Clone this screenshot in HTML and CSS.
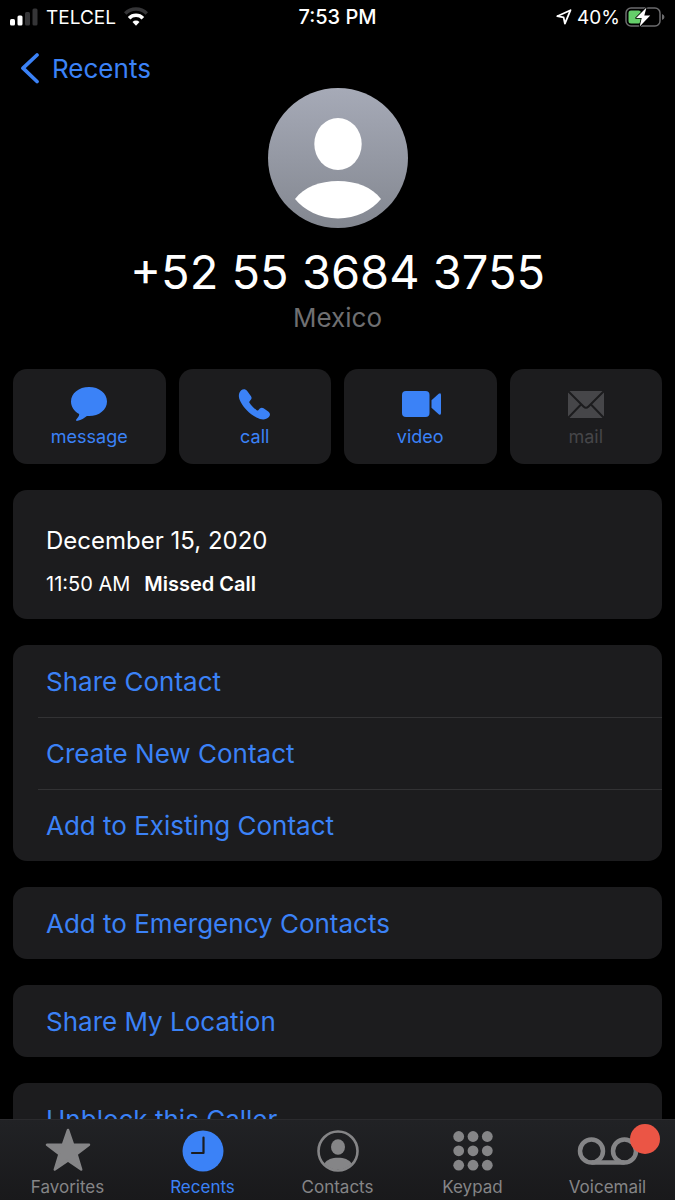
FILE: index.html
```html
<!DOCTYPE html>
<html lang="en">
<head>
    <title>Recents</title>
    <meta charset="utf-8">
    <meta name="viewport" content="width=device-width, initial-scale=1">
    <link rel="stylesheet" href="styles.css">
</head>

<body>
    <div class="status-bar">
        <div class="status-left">
            <svg width="28" height="18" viewBox="0 0 28 18">
                <rect x="0" y="11" width="5" height="6.500" rx="1.500" fill="#fff"/>
                <rect x="7.500" y="7.500" width="5" height="10" rx="1.500" fill="#fff"/>
                <rect x="15" y="4" width="5" height="13.500" rx="1.500" fill="#353537"/>
                <rect x="22.500" y="0.500" width="5" height="17" rx="1.500" fill="#353537"/>
            </svg>
            <span>TELCEL</span>
            <svg width="24" height="20" viewBox="0 0 24 20">
                <path d="M1.200 6.500A15.300 15.300 0 0 1 22.800 6.500" fill="none" stroke="#353537" stroke-width="3.600"/>
                <path d="M5.100 11.200A9.600 9.600 0 0 1 18.900 11.200" fill="none" stroke="#fff" stroke-width="3.600"/>
                <path d="M8.500 15A5 5 0 0 1 15.500 15L12 18.800Z" fill="#fff"/>
            </svg>
        </div>
        <div class="status-time">7:53 PM</div>
        <div class="status-right">
            <svg width="16" height="16" viewBox="0 0 16 16">
                <path d="M14.500 1.200L1.200 7.200L7.600 8.400L8.900 14.600Z" fill="none" stroke="#fff" stroke-width="1.800" stroke-linejoin="round"/>
            </svg>
            <span>40%</span>
            <svg width="40" height="20" viewBox="0 0 40 20">
                <rect x="1" y="1" width="34" height="18" rx="5" fill="none" stroke="#6b6b6d" stroke-width="1.500"/>
                <rect x="3.500" y="3.500" width="12.500" height="13" rx="2.500" fill="#65cf6a"/>
                <path d="M37 7Q39.500 8 39.500 10Q39.500 12 37 13Z" fill="#6b6b6d"/>
                <path d="M21.500 0.500L11 11H16.700L14.700 19.500L25.200 8.500H19.300Z" fill="#fff" stroke="#000" stroke-width="1.600" stroke-linejoin="round" paint-order="stroke"/>
            </svg>
        </div>
    </div>

    <nav class="nav-bar">
        <a href="#recents" class="back-link">
            <svg width="20" height="32" viewBox="0 0 20 32">
                <path d="M17 3L3 16.200L17 29.500" fill="none" stroke="currentColor" stroke-width="3.700" stroke-linecap="round" stroke-linejoin="round"/>
            </svg>
            <span>Recents</span>
        </a>
    </nav>

    <main class="content">
        <header class="contact">
            <svg class="avatar" width="140" height="140" viewBox="0 0 140 140">
                <defs>
                    <linearGradient id="avatar-bg" x1="0" y1="0" x2="0" y2="1">
                        <stop offset="0" stop-color="#a6aab7"/>
                        <stop offset="1" stop-color="#838790"/>
                    </linearGradient>
                </defs>
                <circle cx="70" cy="70" r="70" fill="url(#avatar-bg)"/>
                <ellipse cx="70" cy="56" rx="23.700" ry="26" fill="#fff"/>
                <path d="M27 111C36 99 52 93 70 93C88 93 104 99 113 111C104 122 88 130.500 70 130.500C52 130.500 36 122 27 111Z" fill="#fff"/>
            </svg>
            <h1 class="number">+52 55 3684 3755</h1>
            <p class="region">Mexico</p>
        </header>

        <div class="actions">
            <button type="button" class="action">
                <svg width="42" height="36" viewBox="0 0 42 36">
                    <path d="M21 1C10.800 1 3 7.300 3 15.500C3 20.900 6.200 25.300 11.200 28C11.300 30 9.800 31.800 8.400 33.300C7.500 34.400 8.400 35.200 9.700 34.800C13.200 34 16.200 32.200 18.900 30C19.600 30.100 20.300 30.100 21 30.100C31.200 30.100 39 23.700 39 15.500C39 7.300 31.200 1 21 1Z" fill="currentColor"/>
                </svg>
                <span>message</span>
            </button>
            <button type="button" class="action">
                <svg width="42" height="36" viewBox="0 0 42 36">
                    <path d="M7.200 4.300C8.900 2.700 11.700 2.900 13.200 4.900L17 10.200C18 11.700 17.700 12.900 16.600 14.100L15.600 15.300C15.200 15.900 15.200 16.400 15.600 17C17.200 19.600 20 22.400 22.700 24.200C23.400 24.600 23.900 24.500 24.500 23.900L25.800 22.600C27 21.500 28.200 21.300 29.600 22.200L34.200 25.400C36.300 26.900 36.500 29.300 34.900 31C31.900 34.200 27.400 34.200 22.500 31.500C15.700 27.800 10 22 6.700 15.900C4.200 11.300 4.100 7.200 7.200 4.300Z" fill="currentColor"/>
                </svg>
                <span>call</span>
            </button>
            <button type="button" class="action">
                <svg width="42" height="36" viewBox="0 0 42 36">
                    <rect x="3" y="5" width="27.500" height="26" rx="4" fill="currentColor"/>
                    <path d="M32.500 14.200L39.700 7.800Q42 6.200 42 9V27Q42 29.800 39.700 28.200L32.500 21.800Z" fill="currentColor"/>
                </svg>
                <span>video</span>
            </button>
            <button type="button" class="action" disabled>
                <svg width="42" height="36" viewBox="0 0 42 36">
                    <rect x="3" y="5" width="36" height="27" rx="2" fill="currentColor"/>
                    <path d="M3 5L18.500 20.500Q21 23 23.500 20.500L39 5M3 32L16 18.500M39 32L26 18.500" fill="none" stroke="#1c1c1e" stroke-width="2"/>
                </svg>
                <span>mail</span>
            </button>
        </div>

        <section class="card call-log">
            <h2 class="log-date">December 15, 2020</h2>
            <p class="log-entry"><span>11:50 AM</span><b>Missed Call</b></p>
        </section>

        <div class="card">
            <button type="button" class="row">Share Contact</button>
            <button type="button" class="row">Create New Contact</button>
            <button type="button" class="row">Add to Existing Contact</button>
        </div>

        <div class="card">
            <button type="button" class="row">Add to Emergency Contacts</button>
        </div>

        <div class="card">
            <button type="button" class="row">Share My Location</button>
        </div>

        <div class="card">
            <button type="button" class="row">Unblock this Caller</button>
        </div>
    </main>

    <nav class="tab-bar">
        <a href="#favorites" class="tab">
            <svg width="46" height="44" viewBox="0 0 46 44">
                <path d="M23 2L28 16.500L44 16.700L31.500 26.200L36.200 41.500L23 32.500L9.800 41.500L14.500 26.200L2 16.700L18 16.500Z" fill="currentColor" stroke="currentColor" stroke-width="2.500" stroke-linejoin="round"/>
            </svg>
            <span>Favorites</span>
        </a>
        <a href="#recents" class="tab active">
            <svg width="46" height="44" viewBox="0 0 46 44">
                <circle cx="23" cy="23" r="20.500" fill="currentColor"/>
                <path d="M23.500 9.500V25H12" fill="none" stroke="#1c1d20" stroke-width="2.200" stroke-linecap="round" stroke-linejoin="round"/>
            </svg>
            <span>Recents</span>
        </a>
        <a href="#contacts" class="tab">
            <svg width="46" height="44" viewBox="0 0 46 44">
                <circle cx="23" cy="23" r="19.500" fill="none" stroke="currentColor" stroke-width="2.600"/>
                <ellipse cx="23" cy="19" rx="7" ry="7.800" fill="currentColor"/>
                <path d="M9.500 35.500C12 31.500 17 29.800 23 29.800C29 29.800 34 31.500 36.500 35.500C33 39.700 28.500 41.500 23 41.500C17.500 41.500 13 39.700 9.500 35.500Z" fill="currentColor"/>
            </svg>
            <span>Contacts</span>
        </a>
        <a href="#keypad" class="tab">
            <svg width="46" height="44" viewBox="0 0 46 44" fill="currentColor">
                <circle cx="8.700" cy="8.500" r="5.400"/>
                <circle cx="23" cy="8.500" r="5.400"/>
                <circle cx="37.300" cy="8.500" r="5.400"/>
                <circle cx="8.700" cy="22.800" r="5.400"/>
                <circle cx="23" cy="22.800" r="5.400"/>
                <circle cx="37.300" cy="22.800" r="5.400"/>
                <circle cx="8.700" cy="37.200" r="5.400"/>
                <circle cx="23" cy="37.200" r="5.400"/>
                <circle cx="37.300" cy="37.200" r="5.400"/>
            </svg>
            <span>Keypad</span>
        </a>
        <a href="#voicemail" class="tab">
            <svg width="62" height="44" viewBox="0 0 62 44" fill="none" stroke="currentColor" stroke-width="4.500">
                <circle cx="14.500" cy="23" r="11.500"/>
                <circle cx="47.500" cy="23" r="11.500"/>
                <path d="M14.500 34.500H47.500"/>
            </svg>
            <span>Voicemail</span>
            <i class="badge"></i>
        </a>
    </nav>
</body>
</html>
```

FILE: styles.css
```css
* {
    box-sizing: border-box;
}

body {
    margin: 0;
    height: 100vh;
    display: flex;
    flex-direction: column;
    font-family: Inter, "Liberation Sans", sans-serif;
    background-color: #000000;
    color: #ffffff;
    overflow: hidden;
}

h1, h2, p {
    margin: 0;
    font-weight: 400;
}

a {
    text-decoration: none;
}

svg {
    display: block;
    flex: none;
}

button {
    font-family: inherit;
    border: none;
    padding: 0;
    cursor: pointer;
}

.status-bar {
    display: grid;
    grid-template-columns: 1fr auto 1fr;
    align-items: center;
    height: 34px;
    padding: 0 10px;
    font-size: 19px;
    flex: none;
}

.status-left, .status-right {
    display: flex;
    align-items: center;
    gap: 8px;
}

.status-right {
    justify-content: flex-end;
    gap: 5px;
}

.status-time {
    font-size: 20px;
    font-weight: 500;
}

.nav-bar {
    padding: 18px 20px 4px;
    flex: none;
}

.back-link {
    display: inline-flex;
    align-items: center;
    gap: 12px;
    height: 32px;
    font-size: 26px;
    color: #3b82f7;
    vertical-align: top;
}

.content {
    flex: 1;
    min-height: 0;
    padding: 0 13px 26px;
    overflow-y: auto;
    scrollbar-width: none;
}

.contact {
    display: flex;
    flex-direction: column;
    align-items: center;
}

.number {
    margin-top: 14px;
    font-size: 47px;
    line-height: 60px;
}

.region {
    font-size: 26px;
    line-height: 32px;
    color: #6f6f71;
}

.actions {
    display: grid;
    grid-template-columns: repeat(4, 1fr);
    gap: 13px;
    margin-top: 35px;
}

.action {
    display: flex;
    flex-direction: column;
    align-items: center;
    gap: 3px;
    height: 95px;
    padding-top: 17px;
    font-size: 18px;
    line-height: 24px;
    color: #3b82f7;
    background-color: #1c1c1e;
    border-radius: 14px;
}

.action:disabled {
    color: #464649;
    cursor: default;
}

.card {
    margin-top: 26px;
    background-color: #1c1c1e;
    border-radius: 14px;
    overflow: hidden;
}

.call-log {
    padding: 35px 33px 22px;
}

.log-date {
    font-size: 24px;
    line-height: 32px;
}

.log-entry {
    display: flex;
    gap: 14px;
    margin-top: 14px;
    font-size: 20px;
    line-height: 26px;
}

.log-entry b {
    font-weight: 600;
}

.row {
    display: block;
    width: 100%;
    height: 72px;
    padding: 0 33px;
    font-size: 26px;
    text-align: left;
    color: #3b82f7;
    background: none;
}

/* separator starts a bit left of the text */
.row + .row {
    background: linear-gradient(#323234, #323234) 25px 0 / 100% 1px no-repeat;
}

.tab-bar {
    display: flex;
    height: 81px;
    padding-top: 8px;
    background: linear-gradient(#212225, #19191b);
    border-top: 1px solid #2b2b2e;
    flex: none;
}

.tab {
    position: relative;
    flex: 1;
    display: flex;
    flex-direction: column;
    align-items: center;
    gap: 5px;
    font-size: 17px;
    line-height: 20px;
    color: #858587;
}

.tab.active {
    color: #3b82f7;
}

.badge {
    position: absolute;
    top: -4px;
    right: 15px;
    width: 30px;
    height: 30px;
    border-radius: 50%;
    background-color: #eb5545;
}
```
